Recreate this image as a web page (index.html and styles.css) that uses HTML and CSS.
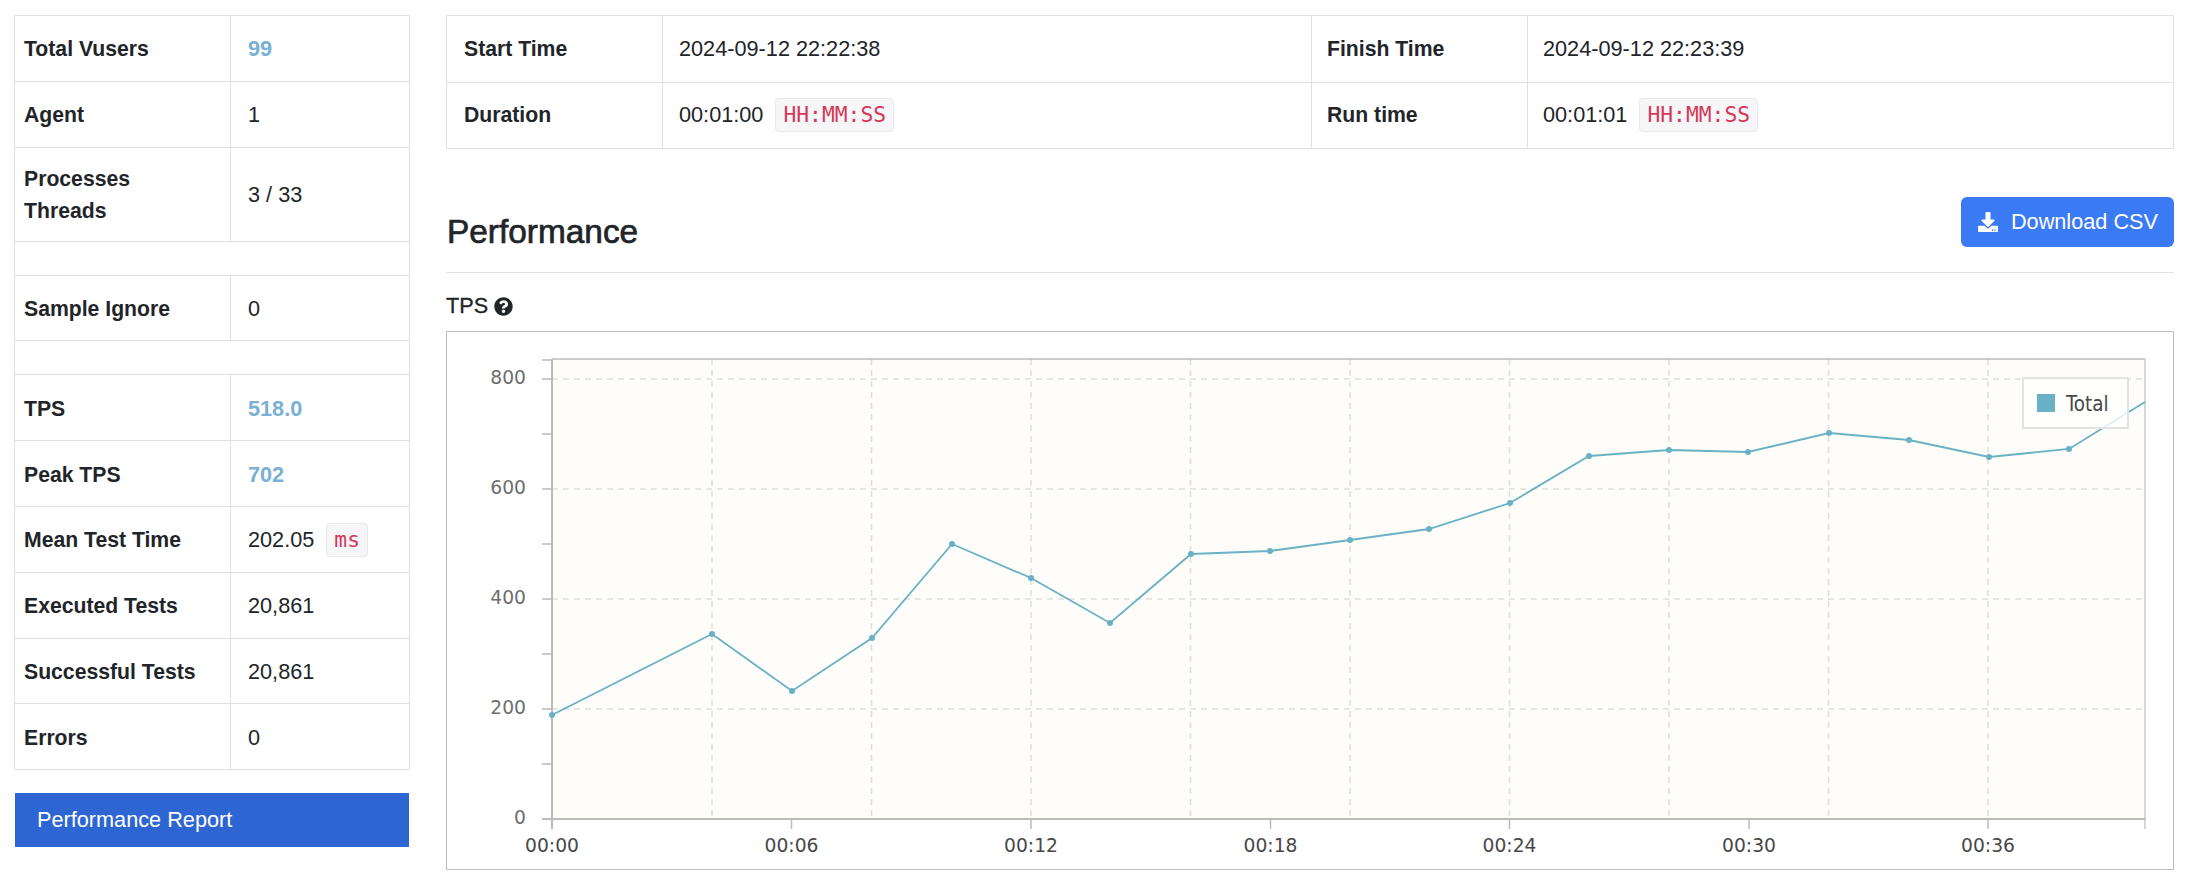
FILE: index.html
```html
<!DOCTYPE html>
<html lang="en">
<head>
    <meta charset="UTF-8">
    <meta name="viewport" content="width=device-width, initial-scale=1.0">
    <title>Performance Report</title>
    <link rel="stylesheet" href="styles.css">
</head>
<body>
    <div class="page">
        <aside class="sidebar">
            <table class="info side-table">
                <tr><th>Total Vusers</th><td><span class="accent">99</span></td></tr>
                <tr><th>Agent</th><td>1</td></tr>
                <tr class="tall"><th>Processes<br>Threads</th><td>3 / 33</td></tr>
                <tr class="spacer"><td colspan="2"></td></tr>
                <tr><th>Sample Ignore</th><td>0</td></tr>
                <tr class="spacer"><td colspan="2"></td></tr>
                <tr><th>TPS</th><td><span class="accent">518.0</span></td></tr>
                <tr><th>Peak TPS</th><td><span class="accent">702</span></td></tr>
                <tr><th>Mean Test Time</th><td>202.05 <code>ms</code></td></tr>
                <tr><th>Executed Tests</th><td>20,861</td></tr>
                <tr><th>Successful Tests</th><td>20,861</td></tr>
                <tr><th>Errors</th><td>0</td></tr>
            </table>
            <a class="report-btn" href="#">Performance Report</a>
        </aside>

        <main class="content">
            <table class="info top-table">
                <tr>
                    <th>Start Time</th><td>2024-09-12 22:22:38</td>
                    <th>Finish Time</th><td>2024-09-12 22:23:39</td>
                </tr>
                <tr>
                    <th>Duration</th><td>00:01:00 <code>HH:MM:SS</code></td>
                    <th>Run time</th><td>00:01:01 <code>HH:MM:SS</code></td>
                </tr>
            </table>

            <div class="section-head">
                <h2>Performance</h2>
                <a class="csv-btn" href="#">
                    <svg class="csv-icon" viewBox="0 0 512 512"><path d="M216 0h80c13.3 0 24 10.7 24 24v168h87.7c17.8 0 26.7 21.5 14.1 34.1L269.7 378.3c-7.5 7.5-19.8 7.5-27.3 0L90.1 226.1c-12.6-12.6-3.7-34.1 14.1-34.1H192V24c0-13.3 10.7-24 24-24zm296 376v112c0 13.3-10.7 24-24 24H24c-13.3 0-24-10.7-24-24V376c0-13.3 10.7-24 24-24h146.7l49 49c20.1 20.1 52.5 20.1 72.6 0l49-49H488c13.3 0 24 10.7 24 24zm-124 88c0-11-9-20-20-20s-20 9-20 20 9 20 20 20 20-9 20-20zm64 0c0-11-9-20-20-20s-20 9-20 20 9 20 20 20 20-9 20-20z"/></svg>
                    Download CSV
                </a>
            </div>

            <div class="chart-title">
                TPS
                <svg class="help-icon" viewBox="0 0 512 512"><path d="M504 256c0 136.997-111.043 248-248 248S8 392.997 8 256C8 119.083 119.043 8 256 8s248 111.083 248 248zM262.655 90c-54.497 0-89.255 22.957-116.549 63.758-3.536 5.286-2.353 12.415 2.715 16.258l34.699 26.31c5.205 3.947 12.621 3.008 16.665-2.122 17.864-22.658 30.113-35.797 57.303-35.797 20.429 0 45.698 13.148 45.698 32.958 0 14.976-12.363 22.667-32.534 33.976C247.128 238.528 216 254.941 216 296v4c0 6.627 5.373 12 12 12h56c6.627 0 12-5.373 12-12v-1.333c0-28.462 83.186-29.647 83.186-106.667 0-58.002-60.165-102-116.531-102zM256 338c-25.365 0-46 20.635-46 46 0 25.364 20.635 46 46 46s46-20.636 46-46c0-25.365-20.635-46-46-46z"/></svg>
            </div>

            <div class="chart-box">
                <!-- viewBox uses the page's own coordinates -->
                <svg class="chart" width="1726" height="537" viewBox="447 332 1726 537">
                    <rect class="plot-bg" x="552" y="359" width="1593" height="460"/>

                    <path class="grid" d="M552 379H2145M552 489H2145M552 599H2145M552 709H2145"/>
                    <path class="grid" d="M712 359V819M871.500 359V819M1031 359V819M1190.500 359V819M1350 359V819M1509.500 359V819M1669 359V819M1828.500 359V819M1988 359V819"/>

                    <path class="plot-top" d="M552 359H2145"/>
                    <path class="plot-right" d="M2145 359V829"/>
                    <path class="axis" d="M552 359V829M542 819H2145"/>
                    <path class="tick" d="M542 360H552M542 379H552M542 434H552M542 489H552M542 544H552M542 599H552M542 654H552M542 709H552M542 764H552"/>
                    <path class="tick" d="M791.500 819V829M1031 819V829M1270.500 819V829M1509.500 819V829M1749 819V829M1988 819V829"/>

                    <g class="y-labels">
                        <text x="526" y="384">800</text>
                        <text x="526" y="494">600</text>
                        <text x="526" y="604">400</text>
                        <text x="526" y="714">200</text>
                        <text x="526" y="824">0</text>
                    </g>
                    <g class="x-labels">
                        <text x="552" y="852">00:00</text>
                        <text x="791.500" y="852">00:06</text>
                        <text x="1031" y="852">00:12</text>
                        <text x="1270.500" y="852">00:18</text>
                        <text x="1509.500" y="852">00:24</text>
                        <text x="1749" y="852">00:30</text>
                        <text x="1988" y="852">00:36</text>
                    </g>

                    <polyline class="series" points="552,715 712,634 792,691 872,638 952,544 1031,578 1110,623 1191,554 1270,551 1350,540 1429,529 1510,503 1589,456 1669,450 1748,452 1829,433 1909,440 1989,457 2069,449 2145,402"/>
                    <g class="dots">
                        <circle cx="552" cy="715" r="3"/><circle cx="712" cy="634" r="3"/><circle cx="792" cy="691" r="3"/>
                        <circle cx="872" cy="638" r="3"/><circle cx="952" cy="544" r="3"/><circle cx="1031" cy="578" r="3"/>
                        <circle cx="1110" cy="623" r="3"/><circle cx="1191" cy="554" r="3"/><circle cx="1270" cy="551" r="3"/>
                        <circle cx="1350" cy="540" r="3"/><circle cx="1429" cy="529" r="3"/><circle cx="1510" cy="503" r="3"/>
                        <circle cx="1589" cy="456" r="3"/><circle cx="1669" cy="450" r="3"/><circle cx="1748" cy="452" r="3"/>
                        <circle cx="1829" cy="433" r="3"/><circle cx="1909" cy="440" r="3"/><circle cx="1989" cy="457" r="3"/>
                        <circle cx="2069" cy="449" r="3"/>
                    </g>

                    <rect class="legend-box" x="2023" y="378" width="105" height="50"/>
                    <rect class="legend-swatch" x="2037" y="394" width="18" height="18"/>
                    <text class="legend-text" x="2066" y="411">Total</text>
                </svg>
            </div>
        </main>
    </div>
</body>
</html>
```
FILE: styles.css
```css
* {
    box-sizing: border-box;
}

body {
    font-family: "Liberation Sans", Arial, sans-serif;
    font-size: 21.7px;
    color: #212529;
    background-color: #fff;
    margin: 0;
}

.page {
    display: flex;
    gap: 36px;
    padding: 15px 16px 0 14px;
}

.sidebar {
    width: 396px;
    flex-shrink: 0;
}

.content {
    flex: 1;
    min-width: 0;
}

/* tables */
.info {
    width: 100%;
    border-collapse: collapse;
    table-layout: fixed;
}

.info th,
.info td {
    border: 1px solid #dee2e6;
    height: 65.800px;
    padding: 2px 17px 0;
    text-align: left;
    vertical-align: middle;
}

.info th {
    font-size: 21.200px;
    line-height: 32px;
}

.side-table th {
    width: 216px;
    padding-left: 9px;
}

.side-table .tall th,
.side-table .tall td {
    height: 94px;
}

.side-table .spacer td {
    height: 34px;
}

.top-table th,
.top-table td {
    height: 66.500px;
    padding: 0 17px 0 16px;
}

.top-table th {
    width: 216px;
}

.top-table th:first-child {
    padding-left: 17px;
}

.top-table th:nth-child(3),
.top-table td:nth-child(4) {
    padding-left: 15px;
}

.top-table td:nth-child(2) {
    width: 649px;
}

.accent {
    color: #7ab0d1;
    font-weight: bold;
}

code {
    display: inline-block;
    font-family: "DejaVu Sans Mono", "Liberation Mono", monospace;
    font-size: 21.300px;
    line-height: 32px;
    color: #d63756;
    background-color: #f6f6f9;
    border: 1px solid #e8e8ee;
    border-radius: 4px;
    padding: 0 7px;
    margin-left: 6px;
}

/* buttons */
.report-btn {
    display: block;
    margin: 23px 1px 0;
    height: 54px;
    line-height: 54px;
    padding-left: 22px;
    color: #fff;
    background-color: #2d66d3;
    text-decoration: none;
}

.csv-btn {
    display: flex;
    align-items: center;
    gap: 13px;
    height: 50px;
    padding: 0 16px 0 17px;
    color: #fff;
    background-color: #3a7af5;
    border-radius: 6px;
    text-decoration: none;
}

.csv-icon {
    width: 20px;
    height: 20px;
    fill: #fff;
}

/* section */
.section-head {
    display: flex;
    justify-content: space-between;
    align-items: flex-start;
    margin-top: 48px;
    padding-bottom: 25px;
    border-bottom: 1px solid #dee2e6;
}

.section-head h2 {
    margin: 20px 0 0 1px;
    font-size: 33.400px;
    font-weight: normal;
    line-height: 30px;
    -webkit-text-stroke: 0.7px #212529;
}

.chart-title {
    display: flex;
    align-items: center;
    gap: 6px;
    height: 58px;
    padding-top: 8px;
    font-size: 21.7px;
    -webkit-text-stroke: 0.3px #212529;
}

.help-icon {
    width: 19px;
    height: 19px;
    fill: #212529;
}

/* chart */
.chart-box {
    border: 1px solid #bdbdbd;
    height: 539px;
}

.chart {
    display: block;
}

.plot-bg {
    fill: #fefdf9;
}

.grid {
    fill: none;
    stroke: #dedede;
    stroke-width: 1.5;
    stroke-dasharray: 6 5;
}

.plot-top {
    stroke: #999;
    stroke-width: 1;
}

.plot-right {
    stroke: #c8c8c8;
    stroke-width: 1.5;
}

.axis {
    fill: none;
    stroke: #bbb;
    stroke-width: 2;
}

.tick {
    fill: none;
    stroke: #bbb;
    stroke-width: 1.5;
}

.y-labels text {
    font-family: "DejaVu Sans", sans-serif;
    font-size: 18.700px;
    fill: #6e6e6e;
    text-anchor: end;
}

.x-labels text {
    font-family: "DejaVu Sans", sans-serif;
    font-size: 18.700px;
    fill: #484848;
    text-anchor: middle;
}

.series {
    fill: none;
    stroke: #69b1c4;
    stroke-width: 1.8;
}

.dots circle {
    fill: #69b1c4;
}

.legend-box {
    fill: rgba(255, 255, 255, 0.8);
    stroke: #e2e2e2;
    stroke-width: 2;
}

.legend-swatch {
    fill: #69b1c4;
}

.legend-text {
    font-family: "DejaVu Sans", sans-serif;
    font-stretch: condensed;
    font-size: 20.400px;
    fill: #484848;
}
```
